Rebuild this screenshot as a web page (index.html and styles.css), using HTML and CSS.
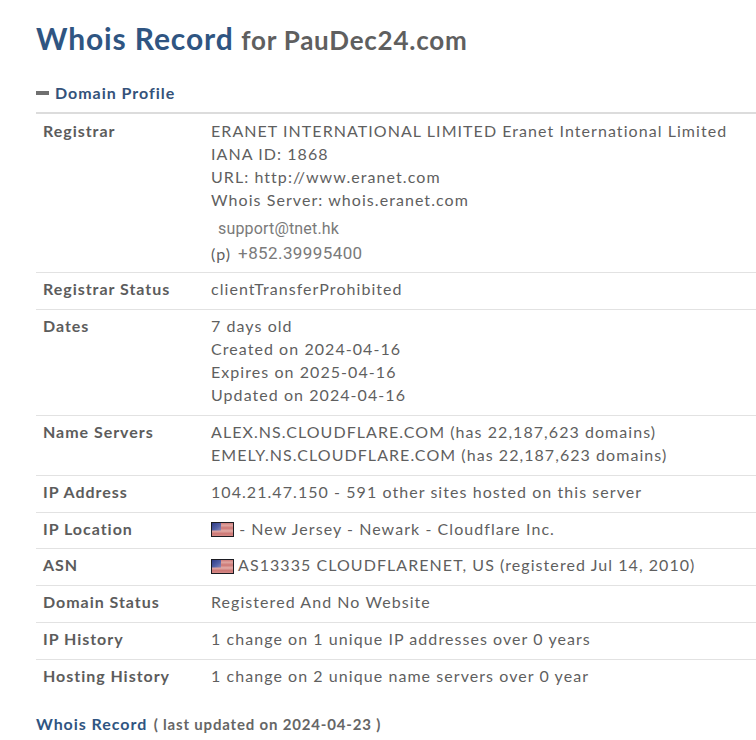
FILE: index.html
```html
<!DOCTYPE html>
<html lang="en">
<head>
<meta charset="utf-8">
<title>Whois Record for PauDec24.com</title>
<link rel="stylesheet" href="styles.css">
</head>
<body>
<main class="page">
  <h1 class="title"><span class="title-main">Whois Record</span> <span class="title-sub">for PauDec24.com</span></h1>
  <h2 class="section"><span class="dash"></span>Domain Profile</h2>
  <div class="table">
    <div class="row row-first">
      <div class="label">Registrar</div>
      <div class="value">
        <div>ERANET INTERNATIONAL LIMITED Eranet International Limited</div>
        <div>IANA ID: 1868</div>
        <div>URL: http://www.eranet.com</div>
        <div>Whois Server: whois.eranet.com</div>
        <div class="email">support@tnet.hk</div>
        <div class="phone"><span class="phone-tag">(p)</span><span class="phone-num">+852.39995400</span></div>
      </div>
    </div>
    <div class="row">
      <div class="label">Registrar Status</div>
      <div class="value">clientTransferProhibited</div>
    </div>
    <div class="row">
      <div class="label">Dates</div>
      <div class="value">
        <div>7 days old</div>
        <div>Created on 2024-04-16</div>
        <div>Expires on 2025-04-16</div>
        <div>Updated on 2024-04-16</div>
      </div>
    </div>
    <div class="row">
      <div class="label">Name Servers</div>
      <div class="value">
        <div>ALEX.NS.CLOUDFLARE.COM (has 22,187,623 domains)</div>
        <div>EMELY.NS.CLOUDFLARE.COM (has 22,187,623 domains)</div>
      </div>
    </div>
    <div class="row">
      <div class="label">IP Address</div>
      <div class="value">104.21.47.150 - 591 other sites hosted on this server</div>
    </div>
    <div class="row">
      <div class="label">IP Location</div>
      <div class="value flagline">
        <svg class="flag" viewBox="0 0 23 15" aria-hidden="true"><use href="#us"/></svg><span>&nbsp;- New Jersey - Newark - Cloudflare Inc.</span>
      </div>
    </div>
    <div class="row">
      <div class="label">ASN</div>
      <div class="value flagline">
        <svg class="flag" viewBox="0 0 23 15" aria-hidden="true"><use href="#us"/></svg><span class="asn">AS13335 CLOUDFLARENET, US (registered Jul 14, 2010)</span>
      </div>
    </div>
    <div class="row">
      <div class="label">Domain Status</div>
      <div class="value">Registered And No Website</div>
    </div>
    <div class="row">
      <div class="label">IP History</div>
      <div class="value">1 change on 1 unique IP addresses over 0 years</div>
    </div>
    <div class="row">
      <div class="label">Hosting History</div>
      <div class="value">1 change on 2 unique name servers over 0 year</div>
    </div>
  </div>
  <p class="record"><span class="record-main">Whois Record</span> ( last updated on 2024-04-23 )</p>
</main>
<svg class="defs" aria-hidden="true">
  <defs>
    <linearGradient id="stripes" x1="0" y1="0" x2="0" y2="1">
      <stop offset="0" stop-color="#c9706f"/>
      <stop offset=".2" stop-color="#dfa5a0"/>
      <stop offset=".4" stop-color="#cc7674"/>
      <stop offset=".6" stop-color="#e2aca7"/>
      <stop offset=".8" stop-color="#cc7674"/>
      <stop offset="1" stop-color="#d9908c"/>
    </linearGradient>
    <linearGradient id="canton" x1="0" y1="0" x2="1" y2="1">
      <stop offset="0" stop-color="#2f3b86"/>
      <stop offset=".6" stop-color="#5563a8"/>
      <stop offset="1" stop-color="#8f88b4"/>
    </linearGradient>
    <symbol id="us" viewBox="0 0 23 15">
      <rect x=".5" y=".5" width="22" height="14" fill="url(#stripes)" stroke="#1c1c22"/>
      <rect x="1" y="1" width="9" height="7.500" fill="url(#canton)"/>
    </symbol>
  </defs>
</svg>
</body>
</html>
```
FILE: styles.css
```css
* { box-sizing: border-box; }
html, body { margin: 0; padding: 0; background: #fff; }
body {
  font-family: Lato, "Liberation Sans", sans-serif;
  color: #5f5f5f;
  overflow: hidden;
  height: 740px;
}
.page { padding: 0 0 0 36px; }
.title {
  margin: 0;
  padding-top: 18px;
  height: 73px;
  line-height: 40px;
  font-weight: 700;
  white-space: nowrap;
}
.title-main { font-size: 30px; color: #2f5582; letter-spacing: .87px; }
.title-sub { font-size: 26px; color: #5f5f5f; letter-spacing: .75px; }
.section {
  margin: 0;
  height: 41px;
  padding-top: 10px;
  padding-bottom: 9px;
  font-size: 16px;
  line-height: 22px;
  font-weight: 700;
  color: #34527a;
  letter-spacing: .97px;
  display: flex;
  align-items: center;
  border-bottom: 2px solid #dcdcdc;
  white-space: nowrap;
}
.dash { width: 13px; height: 4px; background: #707070; margin-right: 6px; }
.row {
  display: flex;
  border-bottom: 1px solid #e2e2e2;
  padding: 4px 0 8.530px;
  font-size: 16px;
  line-height: 23.200px;
  letter-spacing: 1.060px;
}
.row-first { padding: 4.800px 0 7px; }
.label {
  width: 175px;
  flex: none;
  padding-left: 7px;
  font-weight: 700;
  color: #5c5c5c;
  letter-spacing: .97px;
  white-space: nowrap;
}
.value { white-space: nowrap; }
.row:last-child { border-bottom: 0; }
.email { font-family: Roboto, sans-serif; font-size: 16px; letter-spacing: .17px; padding: 5px 0 0 7px; color: #7a7a7a; }
.phone { display: flex; gap: 7px; padding-top: 2px; }
.phone-num { font-family: Roboto, sans-serif; font-size: 17px; letter-spacing: .4px; color: #7a7a7a; }
.flagline { display: flex; align-items: center; }
.flag { width: 23px; height: 15px; flex: none; margin-top: 3px; }
.asn { margin-left: 4px; }
.record {
  margin: 18px 0 0;
  font-size: 15px;
  line-height: 22px;
  font-weight: 700;
  letter-spacing: .82px;
  color: #666;
  white-space: nowrap;
}
.record-main { color: #2f5582; font-size: 16px; letter-spacing: .95px; margin-right: 2px; }
.defs { width: 0; height: 0; position: absolute; }
```
